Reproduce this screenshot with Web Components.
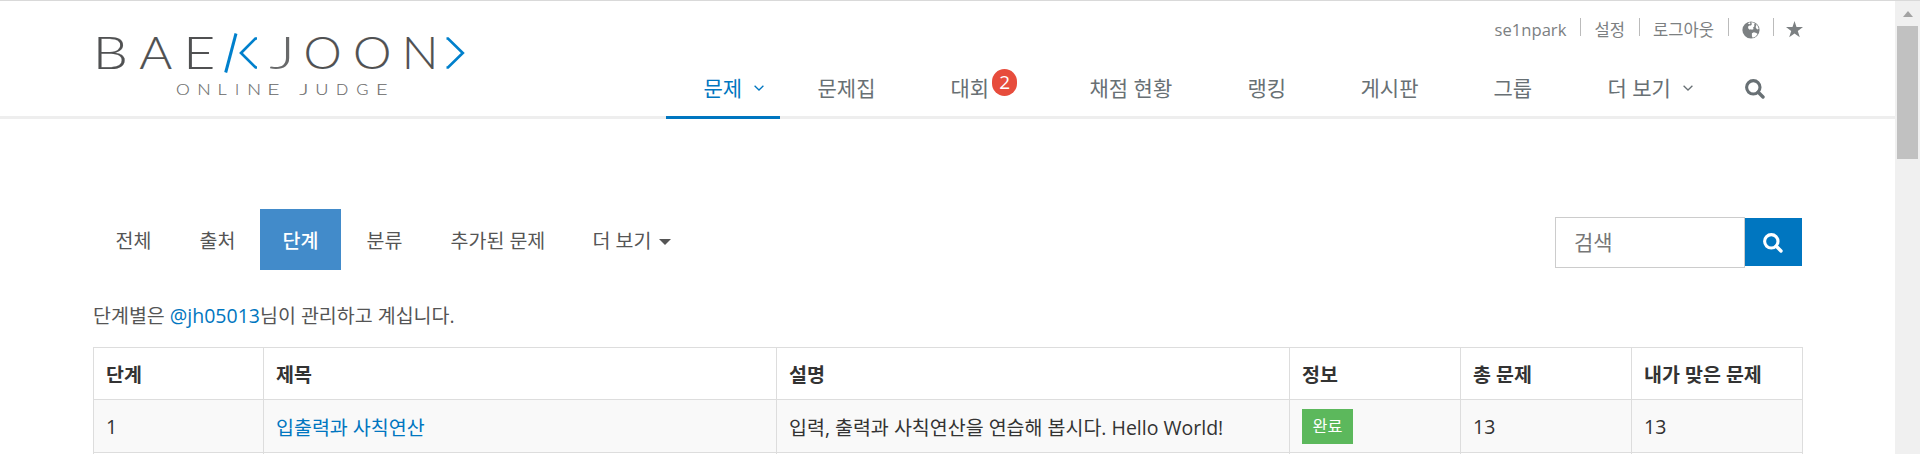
<!DOCTYPE html>
<html lang="ko">
<head>
<meta charset="utf-8">
<title>단계별로 풀어보기</title>
<style>
html,body{margin:0;height:454px;overflow:hidden;background:#fff}
body{font-family:"Open Sans","Noto Sans CJK KR",sans-serif;font-size:19.500px;color:#555}
</style>
</head>
<body>
<oj-page></oj-page>
<script>
function define(name, html, setup) {
  const t = document.createElement('template');
  t.innerHTML = html;
  customElements.define(name, class extends HTMLElement {
    constructor() {
      super();
      this.attachShadow({mode: 'open'}).append(t.content.cloneNode(true));
      if (setup) setup(this.shadowRoot);
    }
  });
}

// Wide-set wordmark: each letter is stretched to its own slot [left, right].
const WORD = [['B',98.3,125],['A',139.800,172],['E',188.800,212.500],['J',270,289.500],['O',306,339.300],['O',355.500,389],['N',406.500,433.700]];
const TAG = [['O',176.800,188.800],['N',199,209],['L',219.300,226.500],['I',236.700,238],['N',249,259.200],['E',269.300,278.300],['J',299.500,306.500],['U',317,327],['D',337.500,347.300],['G',357,367.300],['E',378,386.500]];
function setLetters(group, letters, size, baseline) {
  const ctx = document.createElement('canvas').getContext('2d');
  ctx.font = '300 100px Lato';
  for (const [ch, left, right] of letters) {
    const m = ctx.measureText(ch);
    const inkLeft = -m.actualBoundingBoxLeft * size / 100;
    const inkWidth = (m.actualBoundingBoxRight + m.actualBoundingBoxLeft) * size / 100;
    const s = ch === 'I' ? 1 : (right - left) / inkWidth;
    const el = document.createElementNS('http://www.w3.org/2000/svg', 'text');
    el.setAttribute('font-size', size);
    el.setAttribute('transform', `translate(${left - inkLeft * s} ${baseline}) scale(${s} 1)`);
    if (ch === 'J') el.setAttribute('class', 'j');
    el.textContent = ch;
    group.append(el);
  }
}
define('oj-logo', `<style>:host{display:block;width:380px;height:80px}svg{display:block}
text{font-family:Lato,sans-serif;font-weight:300;fill:#505152}
.word text{stroke:#505152;stroke-width:.15}.word .j{stroke:none;fill:#68696a}.tag text{fill:#686868;stroke:#777;stroke-width:.15}</style>
<svg width="380" height="80" viewBox="93 25 380 80">
<g class="word"></g><g class="tag"></g>
<g fill="none" stroke="#0080cc" stroke-width="3"><path d="M236 33.500 225.700 72.500"/><path d="M257 38.500H255.400L241 53l14.600 14.500H257M446.500 38.500H448L462.800 53 448 67.500H446.500" stroke-width="2.700"/></g>
</svg>`, root => {
  setLetters(root.querySelector('.word'), WORD, 45.5, 69.3);
  setLetters(root.querySelector('.tag'), TAG, 16, 94.5);
});

define('icon-search', `<style>:host{display:block;width:20px;height:20px}svg{display:block;width:100%;height:100%}</style>
<svg viewBox="0 0 20 20" fill="none" stroke="currentColor"><circle cx="8.300" cy="8.300" r="6.700" stroke-width="3.100"/><path d="M13.300 13.300 18 18" stroke-width="3.400" stroke-linecap="round"/></svg>`);

define('icon-chevron', `<style>:host{display:block;width:10px;height:6px}svg{display:block}</style>
<svg width="10" height="6" viewBox="0 0 10 6" fill="none" stroke="currentColor" stroke-width="1.300"><path d="M.6.8 5 5 9.400.8"/></svg>`);

define('icon-globe', `<style>:host{display:block;width:18px;height:18px}svg{display:block}</style>
<svg width="18" height="18" viewBox="0 0 18 18"><circle cx="9" cy="9" r="8.600" fill="currentColor"/>
<path fill="#fff" d="M5.800 2.200 8 1.300 8.500 2.300 7.600 3.300 6.800 3ZM9.300 1.300 11 1.500 12.800 2.200 12.200 3.600 12.400 5.200 11 6.800 11.600 7.900 10 8.700 8.800 8.300 7.700 8.800 6.300 7.600 6 5.800 7.400 4.500 9 4.600 9.800 3.200ZM13.600 2.700 15.600 4.800 16.700 7.800 15.500 8.500 14.300 7.600 13.600 6 14.300 4.600ZM9.900 12.300 11.900 11.200 14.300 11.900 15.600 13.100 13.600 15.400 10.800 16.700 9.900 15.200Z"/></svg>`);

define('icon-star', `<style>:host{display:block;width:17px;height:17px}svg{display:block}</style>
<svg width="17" height="17" viewBox="0 0 17 17"><path fill="currentColor" d="M8.500 0 10.500 6.100H17l-5.200 3.800 2 6.400-5.300-3.900-5.300 3.900 2-6.400L0 6.100h6.500Z"/></svg>`);

define('nav-item', `<style>:host{display:flex;align-items:center;box-sizing:border-box;flex:none;height:62px;padding:1px 0 0 37.500px;border-bottom:3px solid transparent;font-size:21px;color:#687074;white-space:nowrap}
:host([active]){color:#0076c0;border-color:#0076c0}</style><slot></slot>`);

define('count-badge', `<style>:host{display:flex;align-items:center;justify-content:center;width:25px;height:27px;border-radius:13px;background:#e74c3c;color:#fff;font-size:19px;margin:-10px 0 0 3px}</style><slot></slot>`);

define('top-links', `<style>:host{display:flex;justify-content:flex-end;align-items:center;height:18px;color:#7c8082;font-size:16.600px;line-height:18px;white-space:nowrap}
i{width:1px;height:18px;background:#bbb;margin:0 13px 0 14px}.n,.k,.g,.star{margin-top:5px}.star{margin-right:0}i.last{margin:0 12px 0 13px}</style>
<span class="n">se1npark</span><i></i><span class="k">설정</span><i></i><span class="k">로그아웃</span><i></i><icon-globe class="g"></icon-globe><i class="last"></i><icon-star class="star"></icon-star>`);

define('site-header', `<style>:host{display:block;box-sizing:border-box;height:119px;border-top:1px solid #d9d9d9;border-bottom:3px solid #eee;padding:17px 92px 0 93px}
.row{display:flex}oj-logo{flex:none;margin-top:7px}.right{flex:1;min-width:0}
nav{display:flex;margin:21px 0 0 193px}icon-chevron{margin:2px 0 0 12px}
icon-search{margin:4px 0 0 -1px}</style>
<div class="row"><oj-logo></oj-logo><div class="right"><top-links></top-links>
<nav>
<nav-item active style="width:114px">문제<icon-chevron></icon-chevron></nav-item>
<nav-item style="width:133px">문제집</nav-item>
<nav-item style="width:139px">대회<count-badge>2</count-badge></nav-item>
<nav-item style="width:158px">채점 현황</nav-item>
<nav-item style="width:113px">랭킹</nav-item>
<nav-item style="width:133px">게시판</nav-item>
<nav-item style="width:114px">그룹</nav-item>
<nav-item style="width:138px">더 보기<icon-chevron></icon-chevron></nav-item>
<nav-item style="width:60px"><icon-search></icon-search></nav-item>
</nav></div></div>`);

define('tab-pill', `<style>:host{display:flex;align-items:center;box-sizing:border-box;flex:none;height:61px;padding:0 0 0 22.500px;margin-right:3px;white-space:nowrap}
:host([active]){background:#428bca;color:#fff;font-weight:500}</style><slot></slot>`);

define('search-box', `<style>:host{display:flex;width:247px;align-items:flex-start}
.in{box-sizing:border-box;width:190px;height:51px;border:1px solid #ccc;padding-left:18px;font-size:21px;line-height:49px;color:#777}
.btn{width:57px;height:48px;margin-top:1px;background:#0076c0;color:#fff;display:flex;align-items:center;justify-content:center}icon-search{margin:2px 0 0 -1px}</style>
<div class="in">검색</div><div class="btn"><icon-search></icon-search></div>`);

define('step-badge', `<style>:host{display:block;width:51px;height:35px;line-height:35px;background:#5cb85c;color:#fff;text-align:center;font-size:16.300px}</style><slot></slot>`);

define('step-table', `<style>:host{display:block}
.r{display:grid;grid-template-columns:170px 513px 513px 171px 171px 172px;height:53px;box-sizing:border-box;border-bottom:1px solid #ddd;background:#f9f9f9;color:#333;width:1710px}
.h{background:#fff;border-top:1px solid #ddd;font-weight:700}
.r>*{border-left:1px solid #ddd;padding-left:12px;display:flex;align-items:center;white-space:nowrap}
.r>:last-child{border-right:1px solid #ddd}a{color:#0076c0}.t{height:10px;background:#fff}</style>
<div class="r h"><div>단계</div><div>제목</div><div>설명</div><div>정보</div><div>총 문제</div><div>내가 맞은 문제</div></div>
<div class="r"><div>1</div><div><a>입출력과 사칙연산</a></div><div>입력, 출력과 사칙연산을 연습해 봅시다. Hello World!</div><div><step-badge>완료</step-badge></div><div>13</div><div>13</div></div>
<div class="r t"><div></div><div></div><div></div><div></div><div></div><div></div></div>`);

define('page-scrollbar', `<style>:host{display:block;box-sizing:border-box;flex:none;width:25px;height:453px;margin-top:1px;background:#f0f0f0;padding:10px 2px 0}
.a{width:0;margin:0 auto 9px;border:5.500px solid transparent;border-top:0;border-bottom:6px solid #a3a3a3}.t{height:133px;width:21px;background:#c1c1c1}</style><div class="a"></div><div class="t"></div>`);

define('oj-page', `<style>:host{display:flex;height:454px;overflow:hidden;background:linear-gradient(#d9d9d9 0 1px,#fff 1px)}
main{flex:1;min-width:0}.c{padding:90px 92px 0 93px}
.tabs{display:flex;height:61px}search-box{margin:8px 1px 0 auto}
p{margin:32px 0 17px;line-height:28px;white-space:nowrap}a{color:#0076c0}
.caret{border:6px solid transparent;border-top-color:#555;border-bottom:0;margin:4px 0 0 8px}</style>
<main><site-header></site-header>
<div class="c"><div class="tabs">
<tab-pill style="width:81px">전체</tab-pill><tab-pill style="width:80px">출처</tab-pill><tab-pill active style="width:81px">단계</tab-pill><tab-pill style="width:81px">분류</tab-pill><tab-pill style="width:139px">추가된 문제</tab-pill><tab-pill>더 보기<span class="caret"></span></tab-pill>
<search-box></search-box></div>
<p>단계별은 <a>@jh05013</a>님이 관리하고 계십니다.</p>
<step-table></step-table></div></main>
<page-scrollbar></page-scrollbar>`);
</script>
</body>
</html>
